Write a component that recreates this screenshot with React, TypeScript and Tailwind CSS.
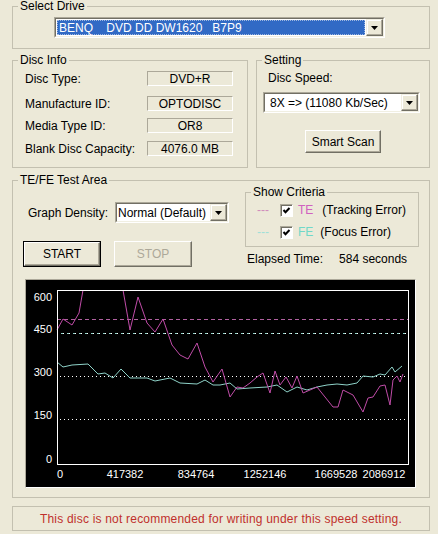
import clsx from "clsx";

const TE_POINTS =
  "57,330 63,319 72,325 79,313 83,290";
const TE_POINTS_2 =
  "123,290 130,330 138,297 147,323 155,332 163,319 172,345 180,355 188,359 197,343 205,367 213,382 222,369 230,397 237,387 243,388 250,383 257,377 263,373 270,393 275,371 280,385 286,377 292,388 297,376 303,393 310,390 317,387 325,397 333,407 338,407 343,390 353,395 363,412 368,398 373,397 380,386 385,385 390,405 393,380 397,376 400,382 403,374";
const FE_POINTS =
  "57,362 63,367 72,365 88,364 98,374 105,373 113,378 121,369 130,378 147,378 155,381 170,378 180,383 197,384 205,380 213,385 220,385 230,383 237,389 250,388 267,387 277,385 287,392 297,387 307,390 317,387 327,385 337,384 347,385 357,383 363,376 373,377 380,374 385,375 392,367 395,372 402,366";

const Y_LABELS = [
  { label: "600", y: 301 },
  { label: "450", y: 333 },
  { label: "300", y: 376 },
  { label: "150", y: 419 },
  { label: "0", y: 463 },
];

const X_LABELS = [
  { label: "417382", x: 125 },
  { label: "834764", x: 196 },
  { label: "1252146", x: 265 },
  { label: "1669528", x: 336 },
  { label: "2086912", x: 384 },
];

const Group: React.FC<{
  title: string;
  className?: string;
  legendClass?: string;
  children?: React.ReactNode;
}> = ({ title, className, legendClass, children }) => (
  <fieldset className={clsx("border border-[#C3C0B0]", className)}>
    <legend className={clsx("ml-[5px] px-[2px]", legendClass ?? "leading-[14px]")}>{title}</legend>
    {children}
  </fieldset>
);

const Arrow = () => (
  <div className="w-[17px] h-[17px] flex items-center justify-center bg-[#ECE9D8] border border-t-[#F1EFE2] border-l-[#F1EFE2] border-b-[#716F64] border-r-[#716F64] shadow-[inset_-1px_-1px_0_#ACA899,inset_1px_1px_0_#fff]">
    <svg width="7" height="4" viewBox="0 0 7 4">
      <polygon points="0,0 7,0 3.5,4" fill="#000" />
    </svg>
  </div>
);

const Combo: React.FC<{ value: string; className?: string; selected?: boolean; textClass?: string }> = ({
  value,
  className,
  selected,
  textClass,
}) => (
  <div className={clsx("flex border border-t-[#ACA899] border-l-[#ACA899] border-b-white border-r-white", className)}>
    <div className="flex flex-1 items-center border border-t-[#716F64] border-l-[#716F64] border-b-[#F1EFE2] border-r-[#F1EFE2] bg-white">
      {selected ? (
        <div className="flex-1 h-[15px] mx-[1px] flex items-center bg-[#316AC5] border border-dotted border-[#9fb8e0] text-white whitespace-pre pl-[1px]">
          {value}
        </div>
      ) : (
        <div className={clsx("flex-1 whitespace-pre", textClass)}>{value}</div>
      )}
      <Arrow />
    </div>
  </div>
);

const ValueBox: React.FC<{ value: string }> = ({ value }) => (
  <div className="w-[86px] h-[15px] flex items-center justify-center border border-t-[#ACA899] border-l-[#ACA899] border-b-white border-r-white">
    {value}
  </div>
);

const Button: React.FC<{ label: string; className?: string; disabled?: boolean; isDefault?: boolean }> = ({
  label,
  className,
  disabled,
  isDefault,
}) => (
  <div className={clsx("flex", isDefault && "border border-black", className)}>
    <div
      className={clsx(
        "flex-1 flex items-center justify-center bg-[#ECE9D8] border border-t-white border-l-white border-b-[#716F64] border-r-[#716F64] shadow-[inset_-1px_-1px_0_#ACA899]",
        disabled ? "text-[#ACA899]" : "text-black"
      )}
    >
      {label}
    </div>
  </div>
);

const Check = () => (
  <div className="w-[13px] h-[13px] bg-white border border-t-[#ACA899] border-l-[#ACA899] border-b-white border-r-white shadow-[inset_1px_1px_0_#716F64]">
    <svg width="11" height="11" viewBox="0 0 11 11">
      <polyline points="2.5,5 4.5,7.2 8.5,3" fill="none" stroke="#000" strokeWidth="2" />
    </svg>
  </div>
);

const Graph = () => (
  <div className="ml-[12px] mt-[12px] w-[391px] h-[209px] border border-t-[#ACA899] border-l-[#ACA899] border-b-white border-r-white bg-black">
    <svg width="389" height="207" viewBox="26 280 389 207" className="block">
      <line x1="57" y1="319.5" x2="408" y2="319.5" stroke="#b0609f" strokeDasharray="4 3" />
      <line x1="57" y1="333.5" x2="408" y2="333.5" stroke="#8fd3c9" strokeDasharray="2 4" strokeDashoffset="2" />
      <line x1="57" y1="333.5" x2="408" y2="333.5" stroke="#fff" strokeDasharray="1 5" />
      <line x1="60" y1="376.5" x2="408" y2="376.5" stroke="#fff" strokeDasharray="1 3" />
      <line x1="60" y1="419.5" x2="408" y2="419.5" stroke="#fff" strokeDasharray="1 3" />
      <polyline points={FE_POINTS} fill="none" stroke="#8fd3c9" strokeWidth="1" />
      <polyline points={TE_POINTS} fill="none" stroke="#c04ca8" strokeWidth="1" />
      <polyline points={TE_POINTS_2} fill="none" stroke="#c04ca8" strokeWidth="1" />
      <rect x="57.5" y="290.5" width="351" height="174" fill="none" stroke="#fff" />
      <g fill="#fff" fontFamily="'Liberation Sans', Arial, sans-serif" fontSize="11">
        {Y_LABELS.map((l) => (
          <text key={l.label} x="52" y={l.y} textAnchor="end">
            {l.label}
          </text>
        ))}
        <text x="57" y="478">
          0
        </text>
        {X_LABELS.map((l) => (
          <text key={l.label} x={l.x} y="478" textAnchor="middle">
            {l.label}
          </text>
        ))}
      </g>
    </svg>
  </div>
);

export default function App() {
  return (
    <div className="w-[438px] h-[534px] overflow-hidden bg-[#ECE9D8] pl-[12px] pr-[8px] flex flex-col font-['Liberation_Sans',Arial,sans-serif] text-[12px] leading-[14px] text-black">
      <Group title="Select Drive" legendClass="leading-[12px]" className="h-[49px]">
        <Combo
          value="BENQ    DVD DD DW1620   B7P9"
          selected
          className="mt-[5px] ml-[41px] w-[331px] h-[21px]"
        />
      </Group>

      <div className="mt-[4px] flex gap-[8px]">
        <Group title="Disc Info" className="w-[236px] h-[115px]">
          {[
            { label: "Disc Type:", value: "DVD+R", mt: "mt-[4px]" },
            { label: "Manufacture ID:", value: "OPTODISC", mt: "mt-[10px]" },
            { label: "Media Type ID:", value: "OR8", mt: "mt-[7px]" },
            { label: "Blank Disc Capacity:", value: "4076.0 MB", mt: "mt-[8px]" },
          ].map((row) => (
            <div key={row.label} className={clsx("flex items-center pl-[12px]", row.mt)}>
              <div className="w-[122px]">{row.label}</div>
              <ValueBox value={row.value} />
            </div>
          ))}
        </Group>

        <Group title="Setting" className="w-[174px] h-[115px]">
          <div className="mt-[4px] ml-[11px]">Disc Speed:</div>
          <Combo
            value="8X => (11080 Kb/Sec)"
            textClass="pl-[5px]"
            className="mt-[7px] ml-[6px] w-[157px] h-[21px]"
          />
          <Button label="Smart Scan" className="mt-[17px] ml-[48px] w-[76px] h-[23px]" />
        </Group>
      </div>

      <Group title="TE/FE Test Area" className="mt-[5px] h-[325px]">
        <div className="flex h-[80px]">
          <div className="w-[232px]">
            <div className="mt-[15px] flex items-center">
              <div className="ml-[15px] w-[87px]">Graph Density:</div>
              <Combo value="Normal (Default)" textClass="pl-[1px]" className="w-[114px] h-[21px]" />
            </div>
            <div className="mt-[18px] flex">
              <Button label="START" isDefault className="ml-[10px] w-[78px] h-[26px]" />
              <Button label="STOP" disabled className="ml-[13px] w-[78px] h-[26px]" />
            </div>
          </div>
          <div>
            <Group title="Show Criteria" className="mt-[-2px] w-[174px] h-[62px]">
              <div className="mt-[4px] h-[14px] flex items-center pl-[11px]">
                <span className="text-[#d08cbc]">---</span>
                <div className="ml-[11px]">
                  <Check />
                </div>
                <span className="ml-[5px] text-[#d060c0]">TE</span>
                <span className="ml-[9px]">(Tracking Error)</span>
              </div>
              <div className="mt-[8px] h-[14px] flex items-center pl-[11px]">
                <span className="text-[#a0e0d8]">---</span>
                <div className="ml-[11px]">
                  <Check />
                </div>
                <span className="ml-[5px] text-[#70d8c8]">FE</span>
                <span className="ml-[7px]">(Focus Error)</span>
              </div>
            </Group>
            <div className="mt-[5px] ml-[2px] flex">
              <span>Elapsed Time:</span>
              <span className="ml-[16px]">584 seconds</span>
            </div>
          </div>
        </div>
        <Graph />
      </Group>

      <div className="mt-[8px] h-[25px] border border-[#C3C0B0] flex items-center justify-center text-[#c0302c] tracking-[0.2px]">
        This disc is not recommended for writing under this speed setting.
      </div>
    </div>
  );
}
